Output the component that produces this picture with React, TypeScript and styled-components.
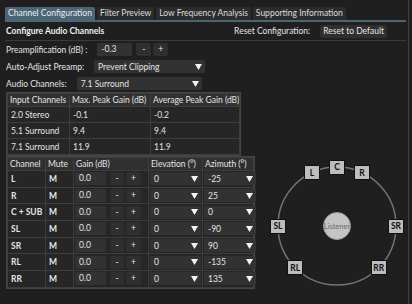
import React from "react";
import styled, { createGlobalStyle } from "styled-components";

const Global = createGlobalStyle`
  html, body { margin: 0; padding: 0; background: #1f1f1f; }
  body { font-family: Lato, "Noto Sans", sans-serif; font-size: 8.5px; color: #e4e4e4; }
  * { box-sizing: border-box; }
`;

const Window = styled.div`
  width: 409px;
  height: 304px;
  overflow: hidden;
  padding: 7px 2px 0 5px;
  border-right: 1px solid #3e3e3e;
  background: #1f1f1f;
`;

const TabBar = styled.div`
  display: flex;
  gap: 2px;
  border-bottom: 2px solid #4b6572;
`;

const Tab = styled.div<{ $active?: boolean }>`
  height: 13px;
  line-height: 13px;
  padding: 0 3px;
  border-radius: 2px 2px 0 0;
  background: ${(p) => (p.$active ? "#4b6572" : "#2c2c2c")};
  color: ${(p) => (p.$active ? "#e8eef1" : "#dcdcdc")};
  white-space: nowrap;
`;

const Header = styled.div`
  display: flex;
  align-items: center;
  justify-content: space-between;
  height: 19px;
  padding: 0 19px 0 1px;
  border-bottom: 1px solid #3a3a3a;
`;

const Title = styled.div`
  font-weight: 700;
  color: #f0f0f0;
`;

const ResetGroup = styled.div`
  display: flex;
  align-items: center;
  gap: 10px;
`;

const Button = styled.div<{ $w?: number }>`
  height: 13px;
  line-height: 13px;
  padding: 0 3px;
  min-width: ${(p) => (p.$w ? `${p.$w}px` : "auto")};
  text-align: center;
  background: #2f2f2f;
  border-radius: 2px;
  color: #e4e4e4;
`;

const Form = styled.div`
  display: flex;
  flex-direction: column;
  gap: 4px;
  padding: 2px 0 0 1px;
`;

const FormRow = styled.div`
  display: flex;
  align-items: center;
  height: 13px;
  gap: 10px;
`;

const Label = styled.div`
  white-space: nowrap;
`;

const Controls = styled.div`
  display: flex;
  align-items: center;
  gap: 2px;
`;

const Input = styled.div<{ $w: number }>`
  width: ${(p) => p.$w}px;
  height: 13px;
  line-height: 13px;
  padding-left: 4px;
  background: #323232;
  border-radius: 1px;
  margin-right: 2px;
`;

const SelectBox = styled.div<{ $w: number }>`
  width: ${(p) => p.$w}px;
  height: 13px;
  display: flex;
  align-items: center;
  justify-content: space-between;
  padding: 0 3px 0 4px;
  background: #323232;
  border-radius: 1px;
`;

const Arrow = () => (
  <svg width="7" height="6" viewBox="0 0 7 6">
    <polygon points="0,0 7,0 3.5,6" fill="#f2f2f2" />
  </svg>
);

const Select = ({ w, value }: { w: number; value: string }) => (
  <SelectBox $w={w}>
    <span>{value}</span>
    <Arrow />
  </SelectBox>
);

const Table = styled.table<{ $w: number }>`
  width: ${(p) => p.$w}px;
  table-layout: fixed;
  border-collapse: separate;
  border-spacing: 1px;
  background: #3d3d3d;
  border: 1px solid #454545;
  font-size: 8.5px;
  color: #e4e4e4;
`;

const Th = styled.th`
  background: #303030;
  font-weight: 400;
  text-align: left;
  height: 12px;
  padding: 0 2px;
  white-space: nowrap;
  overflow: hidden;
  line-height: 12px;
`;

const Td = styled.td<{ $bold?: boolean }>`
  background: #262626;
  height: 15px;
  padding: 0 3px;
  font-weight: ${(p) => (p.$bold ? 700 : 400)};
  white-space: nowrap;
`;

const CtlTd = styled.td`
  background: #262626;
  height: 15.7px;
  padding: 0 1px;
`;

const PeakTable = styled(Table)`
  margin: 2px 0 0 1px;
`;

const Bottom = styled.div`
  display: flex;
  align-items: flex-start;
  padding-left: 1px;
`;

const ChannelTable = styled(Table)`
  flex: none;
`;

const GainCell = styled.div`
  display: flex;
  align-items: center;
  gap: 2px;
`;

const Diagram = styled.div`
  position: relative;
  flex: none;
  width: 152px;
  height: 136px;
  margin-left: 2px;
`;

const Ring = styled.svg`
  position: absolute;
  left: 0;
  top: 0;
`;

const Listener = styled.div`
  position: absolute;
  width: 28px;
  height: 28px;
  border-radius: 50%;
  background: #c4c4c4;
  border: 1px solid #9a9a9a;
  color: #6a6a6a;
  font-size: 7.5px;
  display: flex;
  align-items: center;
  justify-content: center;
`;

const Speaker = styled.div`
  position: absolute;
  width: 16px;
  height: 15px;
  background: #bdbdbd;
  border: 1px solid #101010;
  color: #111;
  font-weight: 700;
  font-size: 8.5px;
  display: flex;
  align-items: center;
  justify-content: center;
`;

const peaks = [
  ["2.0 Stereo", "-0.1", "-0.2"],
  ["5.1 Surround", "9.4", "9.4"],
  ["7.1 Surround", "11.9", "11.9"],
];

const channels = [
  { name: "L", az: -25, label: "L" },
  { name: "R", az: 25, label: "R" },
  { name: "C + SUB", az: 0, label: "C" },
  { name: "SL", az: -90, label: "SL" },
  { name: "SR", az: 90, label: "SR" },
  { name: "RL", az: -135, label: "RL" },
  { name: "RR", az: 135, label: "RR" },
];

const CX = 80;
const CY = 70;
const R = 59;

export default function App() {
  return (
    <>
      <Global />
      <Window>
        <TabBar>
          <Tab $active>Channel Configuration</Tab>
          <Tab>Filter Preview</Tab>
          <Tab>Low Frequency Analysis</Tab>
          <Tab>Supporting Information</Tab>
        </TabBar>
        <Header>
          <Title>Configure Audio Channels</Title>
          <ResetGroup>
            <span>Reset Configuration:</span>
            <Button>Reset to Default</Button>
          </ResetGroup>
        </Header>
        <Form>
          <FormRow>
            <Label>Preamplification (dB) :</Label>
            <Controls>
              <Input $w={35}>-0.3</Input>
              <Button $w={15}>-</Button>
              <Button $w={15}>+</Button>
            </Controls>
          </FormRow>
          <FormRow>
            <Label>Auto-Adjust Preamp:</Label>
            <Select w={111} value="Prevent Clipping" />
          </FormRow>
          <FormRow>
            <Label>Audio Channels:</Label>
            <Select w={125} value="7.1 Surround" />
          </FormRow>
        </Form>
        <PeakTable $w={235}>
          <colgroup>
            <col style={{ width: 61 }} />
            <col style={{ width: 80 }} />
            <col />
          </colgroup>
          <thead>
            <tr>
              <Th>Input Channels</Th>
              <Th>Max. Peak Gain (dB)</Th>
              <Th>Average Peak Gain (dB)</Th>
            </tr>
          </thead>
          <tbody>
            {peaks.map((r) => (
              <tr key={r[0]}>
                {r.map((c, i) => (
                  <Td key={i}>{c}</Td>
                ))}
              </tr>
            ))}
          </tbody>
        </PeakTable>
        <Bottom>
          <ChannelTable $w={249}>
            <colgroup>
              <col style={{ width: 37 }} />
              <col style={{ width: 27 }} />
              <col style={{ width: 74 }} />
              <col style={{ width: 53 }} />
              <col />
            </colgroup>
            <thead>
              <tr>
                <Th>Channel</Th>
                <Th>Mute</Th>
                <Th>Gain (dB)</Th>
                <Th>Elevation (°)</Th>
                <Th>Azimuth (°)</Th>
              </tr>
            </thead>
            <tbody>
              {channels.map((c) => (
                <tr key={c.name}>
                  <Td $bold>{c.name}</Td>
                  <Td $bold>M</Td>
                  <CtlTd>
                    <GainCell>
                      <Input $w={31}>0.0</Input>
                      <Button $w={14}>-</Button>
                      <Button $w={15}>+</Button>
                    </GainCell>
                  </CtlTd>
                  <CtlTd>
                    <Select w={51} value="0" />
                  </CtlTd>
                  <CtlTd>
                    <Select w={52} value={String(c.az)} />
                  </CtlTd>
                </tr>
              ))}
            </tbody>
          </ChannelTable>
          <Diagram>
            <Ring width="152" height="136">
              <circle cx={CX} cy={CY} r={R} fill="none" stroke="#70757a" strokeWidth="1.5" />
            </Ring>
            <Listener style={{ left: CX - 14, top: CY - 14 }}>Listener</Listener>
            {channels.map((c) => {
              const a = (c.az * Math.PI) / 180;
              const x = CX + R * Math.sin(a);
              const y = CY - R * Math.cos(a);
              return (
                <Speaker key={c.label} style={{ left: x - 8, top: y - 7.5 }}>
                  {c.label}
                </Speaker>
              );
            })}
          </Diagram>
        </Bottom>
      </Window>
    </>
  );
}
